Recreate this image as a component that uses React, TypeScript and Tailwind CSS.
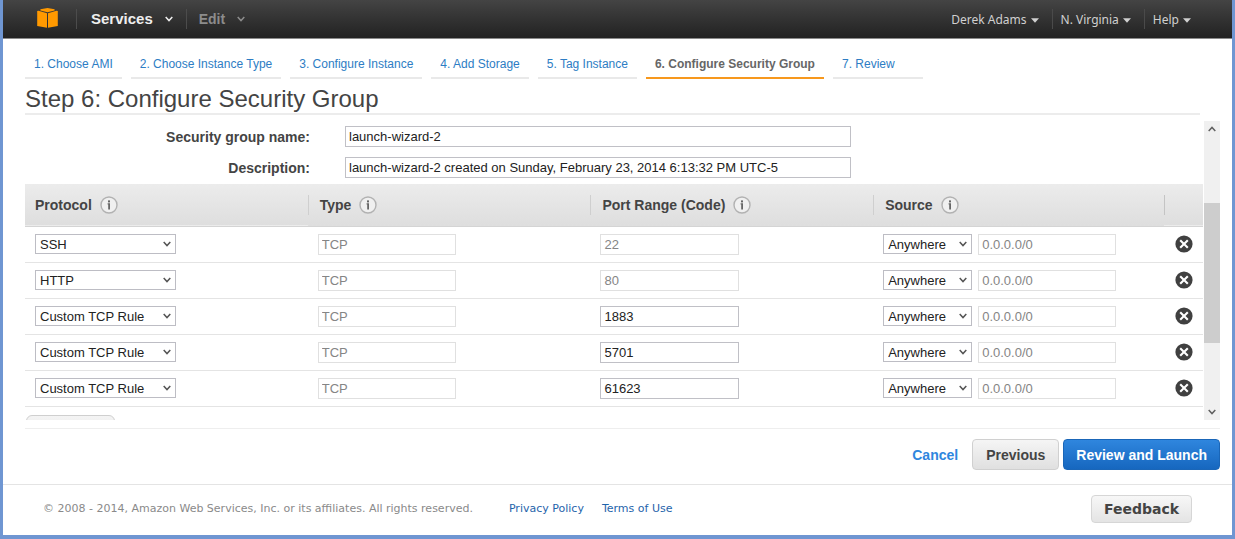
import React, { useState } from 'react';

const steps = [
  '1. Choose AMI',
  '2. Choose Instance Type',
  '3. Configure Instance',
  '4. Add Storage',
  '5. Tag Instance',
  '6. Configure Security Group',
  '7. Review',
];
const activeStep = 5;

const protocols = ['SSH', 'HTTP', 'Custom TCP Rule'];
const sources = ['Anywhere', 'Custom IP', 'My IP'];

type Rule = { id: number; protocol: string; port: string; fixedPort: boolean };

const initialRules: Rule[] = [
  { id: 1, protocol: 'SSH', port: '22', fixedPort: true },
  { id: 2, protocol: 'HTTP', port: '80', fixedPort: true },
  { id: 3, protocol: 'Custom TCP Rule', port: '1883', fixedPort: false },
  { id: 4, protocol: 'Custom TCP Rule', port: '5701', fixedPort: false },
  { id: 5, protocol: 'Custom TCP Rule', port: '61623', fixedPort: false },
];

function Chevron({ className = '', up = false }: { className?: string; up?: boolean }) {
  return (
    <svg viewBox="0 0 8 6" className={`h-[6px] w-[8px] ${className}`} fill="none" stroke="currentColor" strokeWidth="1.5" aria-hidden="true">
      <path d={up ? 'M0.7 5 L4 1.4 L7.3 5' : 'M0.7 1 L4 4.6 L7.3 1'} />
    </svg>
  );
}

function Caret() {
  return (
    <svg viewBox="0 0 8 5" className="h-[5px] w-[8px]" fill="currentColor" aria-hidden="true">
      <path d="M0 0.3H8L4 4.7Z" />
    </svg>
  );
}

function CubeLogo() {
  return (
    <svg viewBox="0 0 21 20" className="h-5 w-[21px]" fill="#ff9900" aria-hidden="true">
      <path d="M3.4 1.3 L10.5 0.1 L17.6 1.3 V2.4 L10.5 4.3 L3.4 2.4 Z" />
      <path d="M0.2 3 L1.6 2.8 L10 5.3 V19.8 L0.2 17.9 Z" />
      <path d="M20.8 3 L19.4 2.8 L11 5.3 V19.8 L20.8 17.9 Z" />
    </svg>
  );
}

function InfoIcon() {
  return (
    <svg viewBox="0 0 18 18" className="h-[18px] w-[18px]" aria-hidden="true">
      <circle cx="9" cy="9" r="8" fill="#f0f0f0" stroke="#b2b2b2" strokeWidth="1.4" />
      <rect x="8" y="4.4" width="2" height="2" fill="#666" />
      <path d="M7.6 7.3H10V13.4H8.2V8.4H7.6Z" fill="#666" />
    </svg>
  );
}

function RemoveIcon() {
  return (
    <svg viewBox="0 0 18 18" className="h-[18px] w-[18px]" aria-hidden="true">
      <circle cx="9" cy="9" r="8.6" fill="#404040" />
      <path d="M5.2 5.2L12.8 12.8M12.8 5.2L5.2 12.8" stroke="#fff" strokeWidth="2.1" />
    </svg>
  );
}

function Select({ label, value, options, className }: { label: string; value: string; options: string[]; className: string }) {
  return (
    <div className={`relative ${className}`}>
      <select
        aria-label={label}
        defaultValue={value}
        className="block h-5 w-full appearance-none border border-[#bdbdc4] bg-white pt-px pl-1 text-[13px] leading-4 text-[#222]"
      >
        {options.map((o) => (
          <option key={o}>{o}</option>
        ))}
      </select>
      <Chevron className="pointer-events-none absolute top-[7px] right-[5px] text-[#555]" />
    </div>
  );
}

function Field({ label, value, disabled, className }: { label: string; value: string; disabled?: boolean; className: string }) {
  return (
    <input
      type="text"
      aria-label={label}
      defaultValue={value}
      disabled={disabled}
      className={`h-[21px] border bg-white px-[3px] text-[13px] leading-4 ${
        disabled ? 'border-[#e0e0e0] text-[#858585]' : 'border-[#c0c0c6] text-[#222]'
      } ${className}`}
    />
  );
}

const barMenus = ['Derek Adams', 'N. Virginia', 'Help'];

function TopBar() {
  return (
    <header className="flex h-[39px] items-center justify-between border-b border-[#8a8a8a] bg-linear-to-b from-[#444] to-[#222] pr-[37px] pl-[34px]">
      <nav className="flex items-center" aria-label="Console">
        <a href="#home" aria-label="Console home" className="block pb-[2px]">
          <CubeLogo />
        </a>
        <span className="ml-[18px] h-5 w-px bg-[#4c4c4c]" />
        <button type="button" className="ml-[14px] flex items-center gap-3 text-[15px] font-bold text-[#eee]">
          Services
          <Chevron />
        </button>
        <span className="ml-[13px] h-5 w-px bg-[#4c4c4c]" />
        <button type="button" className="ml-3 flex items-center gap-3 text-sm font-bold text-[#8c8c8c]">
          Edit
          <Chevron />
        </button>
      </nav>
      <nav className="flex items-center font-['Noto_Sans',sans-serif] text-xs text-[#d0d0d0]" aria-label="Account">
        {barMenus.map((m, i) => (
          <React.Fragment key={m}>
            {i > 0 && <span className="mr-1 ml-[9px] h-5 w-px bg-[#4a4a4a]" />}
            <button type="button" className="flex items-center gap-1 px-1 pt-[2px]">
              {m}
              <Caret />
            </button>
          </React.Fragment>
        ))}
      </nav>
    </header>
  );
}

const th = 'p-0 text-left align-middle text-sm font-bold text-[#444]';

function HeadCell({ title, first }: { title: string; first?: boolean }) {
  return (
    <th scope="col" className={th}>
      <div className={`flex h-5 items-center gap-2 ${first ? 'pl-[10px]' : 'border-l border-[#cfcfcf] pl-[11px]'}`}>
        {title}
        <InfoIcon />
      </div>
    </th>
  );
}

export default function App() {
  const [rules, setRules] = useState(initialRules);

  return (
    <div className="border-x-[3px] border-b-4 border-[#6f96d2] bg-white font-['Liberation_Sans',Arial,sans-serif] text-[#444]">
      <TopBar />

      <main className="pr-3 pl-[22px]">
        <nav className="flex gap-[9px] pt-4" aria-label="Wizard steps">
          {steps.map((s, i) => (
            <a
              key={s}
              href="#step"
              aria-current={i === activeStep ? 'step' : undefined}
              className={`border-b-2 px-[9px] pb-1 text-xs leading-[18px] last:pr-7 ${
                i === activeStep ? 'border-[#f7981d] font-bold text-[#666]' : 'border-[#e9e9e9] text-[#2d7dc4]'
              }`}
            >
              {s}
            </a>
          ))}
        </nav>

        <h1 className="mr-5 border-b-2 border-[#ececec] pt-[6px] text-2xl leading-7 text-[#444]">Step 6: Configure Security Group</h1>

        <div className="mt-[6px] flex h-[299px]">
          <section className="min-w-0 flex-1 overflow-hidden pt-[5px]" aria-label="Security group">
            <div className="grid grid-cols-[285px_506px] items-center gap-x-[35px] gap-y-[10px] pb-[6px]">
              <label htmlFor="name" className="text-right text-sm leading-5 font-bold">Security group name:</label>
              <input id="name" defaultValue="launch-wizard-2" className="h-[21px] border border-[#c0c0c6] px-[3px] text-[13px] text-[#222]" />
              <label htmlFor="desc" className="text-right text-sm leading-5 font-bold">Description:</label>
              <input
                id="desc"
                defaultValue="launch-wizard-2 created on Sunday, February 23, 2014 6:13:32 PM UTC-5"
                className="h-[21px] border border-[#c0c0c6] px-[3px] text-[13px] text-[#222]"
              />
            </div>

            <table className="w-full table-fixed border-collapse">
              <colgroup>
                <col className="w-[24%]" />
                <col className="w-[24%]" />
                <col className="w-[24%]" />
                <col />
                <col className="w-[39px]" />
              </colgroup>
              <thead>
                <tr className="h-[42px] border-b border-[#d4d4d4] bg-linear-to-b from-[#ececec] to-[#dedede]">
                  <HeadCell title="Protocol" first />
                  <HeadCell title="Type" />
                  <HeadCell title="Port Range (Code)" />
                  <HeadCell title="Source" />
                  <th scope="col" aria-label="Remove" className={th}>
                    <div className="h-5 border-l border-[#c4c4c4]" />
                  </th>
                </tr>
              </thead>
              <tbody>
                {rules.map((r) => (
                  <tr key={r.id} className="h-9 border-b border-[#e4e4e4]">
                    <td className="p-0 pl-[10px]">
                      <Select label="Protocol" value={r.protocol} options={protocols} className="w-[141px]" />
                    </td>
                    <td className="p-0 pl-[10px]">
                      <Field label="Type" value="TCP" disabled className="block w-[138px]" />
                    </td>
                    <td className="p-0 pl-[10px]">
                      <Field label="Port range" value={r.port} disabled={r.fixedPort} className="block w-[139px]" />
                    </td>
                    <td className="p-0 pl-[10px]">
                      <div className="flex items-center gap-[6px]">
                        <Select label="Source" value="Anywhere" options={sources} className="w-[89px]" />
                        <Field label="Source range" value="0.0.0.0/0" disabled className="w-[138px]" />
                      </div>
                    </td>
                    <td className="p-0 pl-[11px]">
                      <button
                        type="button"
                        aria-label="Remove rule"
                        className="block"
                        onClick={() => setRules(rules.filter((x) => x.id !== r.id))}
                      >
                        <RemoveIcon />
                      </button>
                    </td>
                  </tr>
                ))}
              </tbody>
            </table>

            <button
              type="button"
              aria-label="Add rule"
              onClick={() => setRules([...rules, { id: Date.now(), protocol: 'Custom TCP Rule', port: '', fixedPort: false }])}
              className="mt-2 ml-px block h-7 w-[89px] rounded-md border border-[#cfcfcf] bg-linear-to-b from-[#f4f4f4] to-[#e2e2e2]"
            />
          </section>

          <div className="ml-px flex w-4 flex-col items-center bg-[#f0f0f0] text-[#606060]" aria-hidden="true">
            <Chevron up className="mt-[5px]" />
            <span className="mt-[71px] h-[140px] w-full bg-[#cdcdcd]" />
            <Chevron className="mt-auto mb-[5px]" />
          </div>
        </div>

        <div className="mt-2 flex items-center justify-end border-t border-[#eee] py-[10px] text-sm font-bold">
          <a href="#cancel" className="mr-[14px] text-[#2e86de]">Cancel</a>
          <button type="button" className="mr-1 h-[31px] rounded-[4px] border border-[#d0d0d0] bg-linear-to-b from-[#f5f5f5] to-[#e0e0e0] px-[13px]">
            Previous
          </button>
          <button type="button" className="h-[31px] rounded-[4px] border border-[#1a66b8] bg-linear-to-b from-[#2f86de] to-[#1667bf] px-3 text-white">
            Review and Launch
          </button>
        </div>
      </main>

      <footer className="mt-1 flex items-center border-t border-[#e4e4e4] pt-[10px] pb-3 pr-10 pl-10 font-['DejaVu_Sans',sans-serif] text-[11px]">
        <span className="text-[#8a8a8a]">© 2008 - 2014, Amazon Web Services, Inc. or its affiliates. All rights reserved.</span>
        <a href="#privacy" className="ml-9 text-[#1f64ab]">Privacy Policy</a>
        <a href="#terms" className="ml-[18px] text-[#1f64ab]">Terms of Use</a>
        <button
          type="button"
          className="ml-auto h-7 rounded-[4px] border border-[#d6d6d6] bg-linear-to-b from-[#f7f7f7] to-[#e4e4e4] px-3 text-sm font-bold text-[#444]"
        >
          Feedback
        </button>
      </footer>
    </div>
  );
}
